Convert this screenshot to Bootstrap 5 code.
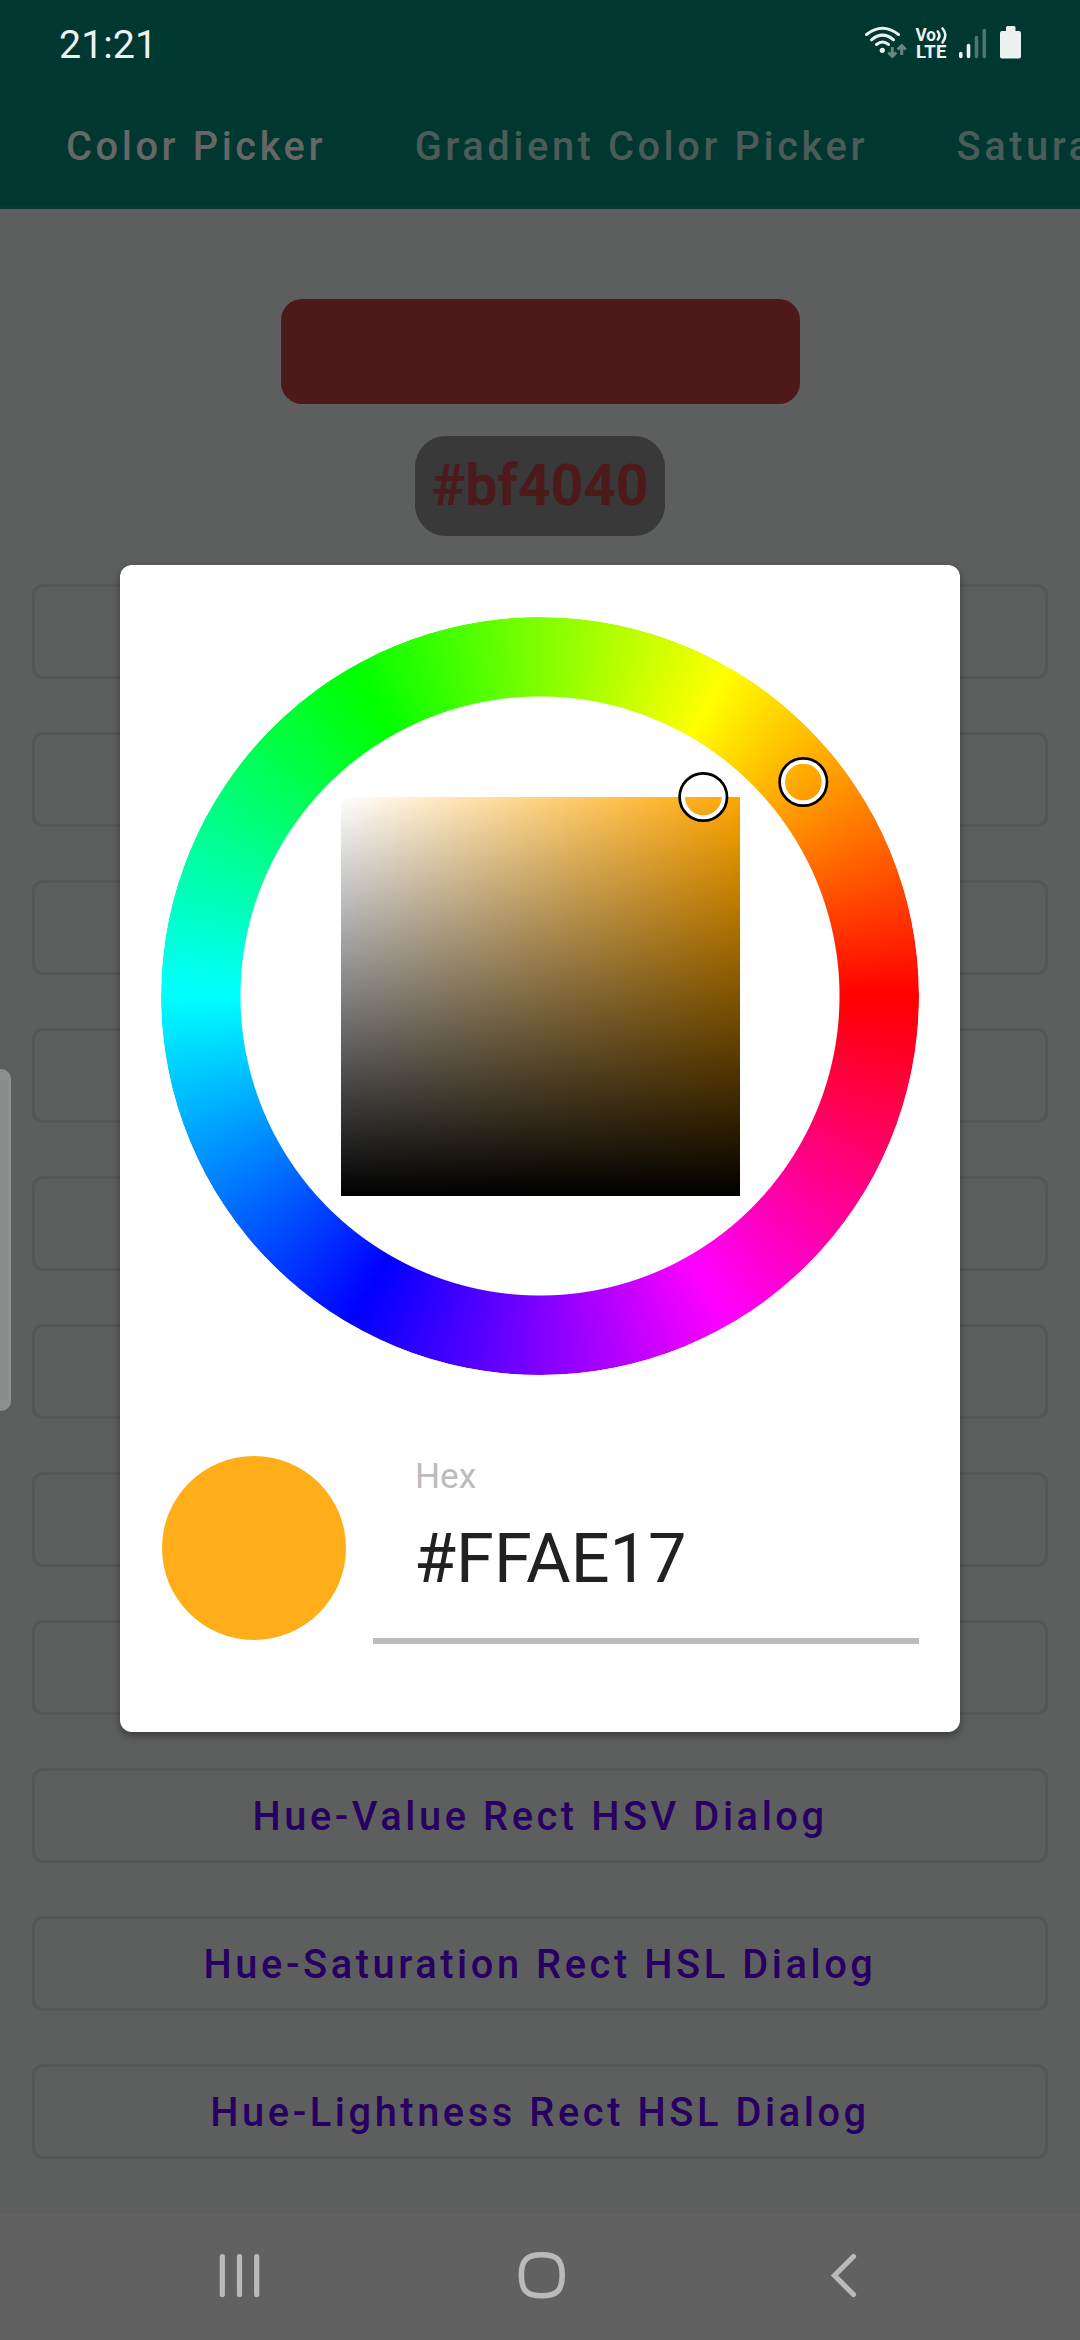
<!DOCTYPE html>
<html lang="en">
<head>
<meta charset="utf-8">
<meta name="viewport" content="width=device-width, initial-scale=1">
<title>Color Picker</title>
<link href="https://cdn.jsdelivr.net/npm/bootstrap@5.3.0/dist/css/bootstrap.min.css" rel="stylesheet">
<style>
body{font-family:Roboto,sans-serif;background:#5d5f5e;width:1080px;height:2340px;overflow:hidden;line-height:1}
.app-head{background:#003731;height:209px;border-bottom:3px solid #083833}
.status-row{height:88px;padding:0 55px 0 59px}
.clock{font-size:39.4px;color:#edf2f1;line-height:90px}
.tab-row{height:118px;padding:0 0 0 66px;gap:88.5px;overflow:hidden}
.tab-row .nav-link{padding:0;font-size:39.8px;font-weight:500;letter-spacing:3.57px;color:#4b5b58;line-height:118px;white-space:nowrap}
.tab-row .nav-link.active{color:#666}
.page-body{height:2005px;padding-top:90px}
.swatch-bar{width:519px;height:105px;border-radius:21px;background:#4c1a1a}
.hex-pill{width:250px;height:100px;border-radius:31px;background:#393939;color:#4c1a1a;font-weight:700;font-size:57px;margin-top:32px;padding-bottom:2px}
.picker-list{margin-top:48px;gap:53px;padding:0 32px}
.picker-list .btn{height:95px;border:3px solid #545657;border-radius:11px;color:#280062;font-size:39.8px;font-weight:500;letter-spacing:3.57px;padding:1px 0 0;line-height:89px}
.sys-nav{height:126px;background:#616161}
.edge-handle{left:0;top:1069px;width:11px;height:342px;background:#8c8e8d;border-right:2px solid #929493;border-radius:0 10px 10px 0}
.picker-dialog{left:120px;top:565px;width:840px;height:1167px;border-radius:12px;padding:52px 41px 0;box-shadow:0 4px 9px rgba(0,0,0,.38)}
.wheel-box{width:758px;height:758px}
.hue-ring{inset:0;border-radius:50%;background:conic-gradient(from 90deg,#f00,#f0f,#00f,#0ff,#0f0,#ff0,#f00);-webkit-mask:radial-gradient(circle,transparent 299px,#000 300px);mask:radial-gradient(circle,transparent 299px,#000 300px)}
.sv-square{width:399px;height:399px;background:linear-gradient(to bottom,transparent,#000),linear-gradient(to right,#fff,#ffa600)}
.thumbs{inset:0}
.result-row{margin-top:81px}
.dot{width:184px;height:184px;border-radius:50%;background:#ffae19;margin-left:1px}
.hex-field{width:546px;height:188px;border-bottom:6px solid #bcbcbc;padding-left:42px}
.hex-label{font-size:35.2px;color:#bcbcbc;margin-top:3px}
.hex-value{font-size:68.4px;color:#212121;margin-top:31px;margin-left:-1px}
</style>
</head>
<body class="position-relative d-flex flex-column">
<header class="app-head flex-shrink-0">
  <div class="status-row d-flex justify-content-between">
    <span class="clock">21:21</span>
    <svg width="165" height="88" viewBox="860 0 165 88" fill="none">
      <g stroke="#edf2f1" stroke-width="3" stroke-linecap="round">
        <path d="M866.500 34.500Q882.500 22 898.500 34.500M871.500 39.800Q882.500 30.500 893.500 39.800M876.500 44.500Q882.500 39.500 888.500 44.500"/>
        <path stroke-width="2.600" d="M937.800 31.500Q941 35.500 937.800 39.500M942.500 28.500Q948.300 35 942.500 42.500"/>
      </g>
      <circle cx="882.300" cy="50.300" r="2.600" fill="#edf2f1"/>
      <g stroke="#66867f" stroke-width="3"><path d="M892.300 47V56M888.300 52.500L892.300 56.500L896.300 52.500M901.700 55V46M897.700 49.500L901.700 45.500L905.700 49.500"/></g>
      <text x="915.500" y="40.500" font-size="18" font-weight="700" fill="#edf2f1" font-family="Roboto" textLength="20.500" lengthAdjust="spacingAndGlyphs">Vo</text>
      <text x="916" y="58" font-size="18.500" font-weight="700" fill="#edf2f1" font-family="Roboto" textLength="30.500">LTE</text>
      <g stroke-width="3.600" stroke-linecap="round"><path stroke="#edf2f1" d="M960.800 53.500V56.500M968.500 45.500V56.500"/><path stroke="#4f756f" d="M976.500 37.500V56.500M984.300 30.500V56.500"/></g>
      <path fill="#edf2f1" d="M1006 27.500q0-1.500 1.500-1.500h6.500q1.500 0 1.500 1.500V31h3.500q2 0 2 2V56.500q0 2-2 2h-17q-2 0-2-2V33q0-2 2-2h4z"/>
    </svg>
  </div>
  <nav class="tab-row nav flex-nowrap">
    <a class="nav-link active" href="#">Color Picker</a>
    <a class="nav-link" href="#">Gradient Color Picker</a>
    <a class="nav-link" href="#">Saturation</a>
  </nav>
</header>
<main class="page-body flex-shrink-0">
  <div class="swatch-bar mx-auto"></div>
  <div class="hex-pill mx-auto d-flex align-items-center justify-content-center">#bf4040</div>
  <div class="picker-list d-flex flex-column">
    <button class="btn" aria-label="Dialog 1"></button>
    <button class="btn" aria-label="Dialog 2"></button>
    <button class="btn" aria-label="Dialog 3"></button>
    <button class="btn" aria-label="Dialog 4"></button>
    <button class="btn" aria-label="Dialog 5"></button>
    <button class="btn" aria-label="Dialog 6"></button>
    <button class="btn" aria-label="Dialog 7"></button>
    <button class="btn" aria-label="Dialog 8"></button>
    <button class="btn">Hue-Value Rect HSV Dialog</button>
    <button class="btn">Hue-Saturation Rect HSL Dialog</button>
    <button class="btn">Hue-Lightness Rect HSL Dialog</button>
  </div>
</main>
<footer class="sys-nav flex-shrink-0">
  <svg class="d-block" width="1080" height="126" viewBox="0 2214 1080 126" fill="none" stroke="#bababa">
    <path stroke-width="5.200" stroke-linecap="round" d="M222.300 2256.500V2294.500M239.500 2256.500V2294.500M256.700 2256.500V2294.500"/>
    <path stroke-width="5.600" d="M541.800 2254.800C557 2254.800 562.200 2260 562.200 2275.300S557 2295.800 541.800 2295.800S521.400 2290.500 521.400 2275.300S526.600 2254.800 541.800 2254.800Z"/>
    <path stroke-width="5.200" stroke-linecap="round" d="M853.500 2256.500L834.500 2275.500L853.500 2294.500"/>
  </svg>
</footer>
<div class="edge-handle position-absolute"></div>
<section class="picker-dialog position-absolute bg-white">
  <div class="wheel-box position-relative d-flex align-items-center justify-content-center">
    <div class="hue-ring position-absolute"></div>
    <div class="sv-square"></div>
    <svg class="thumbs position-absolute" width="758" height="758" viewBox="161 617 758 758" fill="none">
      <g id="thumb"><circle cx="703.300" cy="797" r="20.800" stroke="#fff" stroke-width="5"/><circle cx="703.300" cy="797" r="23.700" stroke="#000" stroke-width="2.700"/></g>
      <use href="#thumb" x="100" y="-15"/>
    </svg>
  </div>
  <div class="result-row d-flex justify-content-between">
    <div class="dot"></div>
    <div class="hex-field d-flex flex-column">
      <div class="hex-label">Hex</div>
      <div class="hex-value">#FFAE17</div>
    </div>
  </div>
</section>
<script src="https://cdn.jsdelivr.net/npm/bootstrap@5.3.0/dist/js/bootstrap.bundle.min.js"></script>
</body>
</html>
